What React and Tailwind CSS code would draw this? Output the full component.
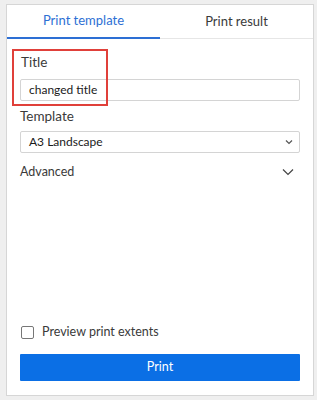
export default function App() {
  const font = { fontFamily: 'Lato, "Open Sans", sans-serif' };
  return (
    <div className="w-[317px] h-[400px] bg-[#efefef] pt-[4px] pl-[6px]" style={font}>
      <div className="w-[308px] h-[392px] bg-white border border-[#d6d6d6] flex flex-col">
        <div className="flex h-[34px] border-b border-[#e6e6e6]">
          <div className="w-1/2 flex items-center justify-center text-[13px] text-[#2d6fd4] border-b-2 border-[#2d6fd4] -mb-px">
            Print template
          </div>
          <div className="w-1/2 flex items-center justify-center text-[13px] text-[#3a3a3a]">
            Print result
          </div>
        </div>
        <div className="flex-1 flex flex-col px-[13px] pt-[10px] pb-[14px]">
          <div className="relative">
            <div className="absolute left-[-8px] top-0 w-[96px] h-[57px] border-2 border-[#e0403a]" />
            <div className="text-[13.5px] text-[#3a3a3a] pt-[4px] pl-[1px] leading-[18px]">Title</div>
            <div className="mt-[8px] h-[22px] border border-[#d4d4d4] rounded-[2px] flex items-center px-[8px] text-[12px] text-[#1a1a1a]">
              changed title
            </div>
          </div>
          <div className="text-[13.5px] text-[#3a3a3a] mt-[6px] leading-[18px]">Template</div>
          <div className="mt-[6px] h-[22px] border border-[#d4d4d4] rounded-[2px] flex items-center justify-between pl-[8px] pr-[6px] text-[12px] text-[#1a1a1a]">
            <span>A3 Landscape</span>
            <svg width="8" height="6" viewBox="0 0 8 6" fill="none" stroke="#555" strokeWidth="1.2">
              <path d="M1 1.5 L4 4.5 L7 1.5" />
            </svg>
          </div>
          <div className="mt-[10px] flex items-center justify-between pr-[6px]">
            <span className="text-[12.5px] text-[#3a3a3a]">Advanced</span>
            <svg width="12" height="8" viewBox="0 0 12 8" fill="none" stroke="#444" strokeWidth="1.2">
              <path d="M1 1.5 L6 6.5 L11 1.5" />
            </svg>
          </div>
          <div className="flex-1" />
          <div className="flex items-center gap-[8px] pl-[1px]">
            <div className="w-[13px] h-[13px] border border-[#777] rounded-[2px]" />
            <span className="text-[12.5px] text-[#3a3a3a]">Preview print extents</span>
          </div>
          <div className="mt-[12px] h-[27px] bg-[#0b6fe5] rounded-[1px] flex items-center justify-center text-[12.5px] text-white">
            Print
          </div>
        </div>
      </div>
    </div>
  );
}
